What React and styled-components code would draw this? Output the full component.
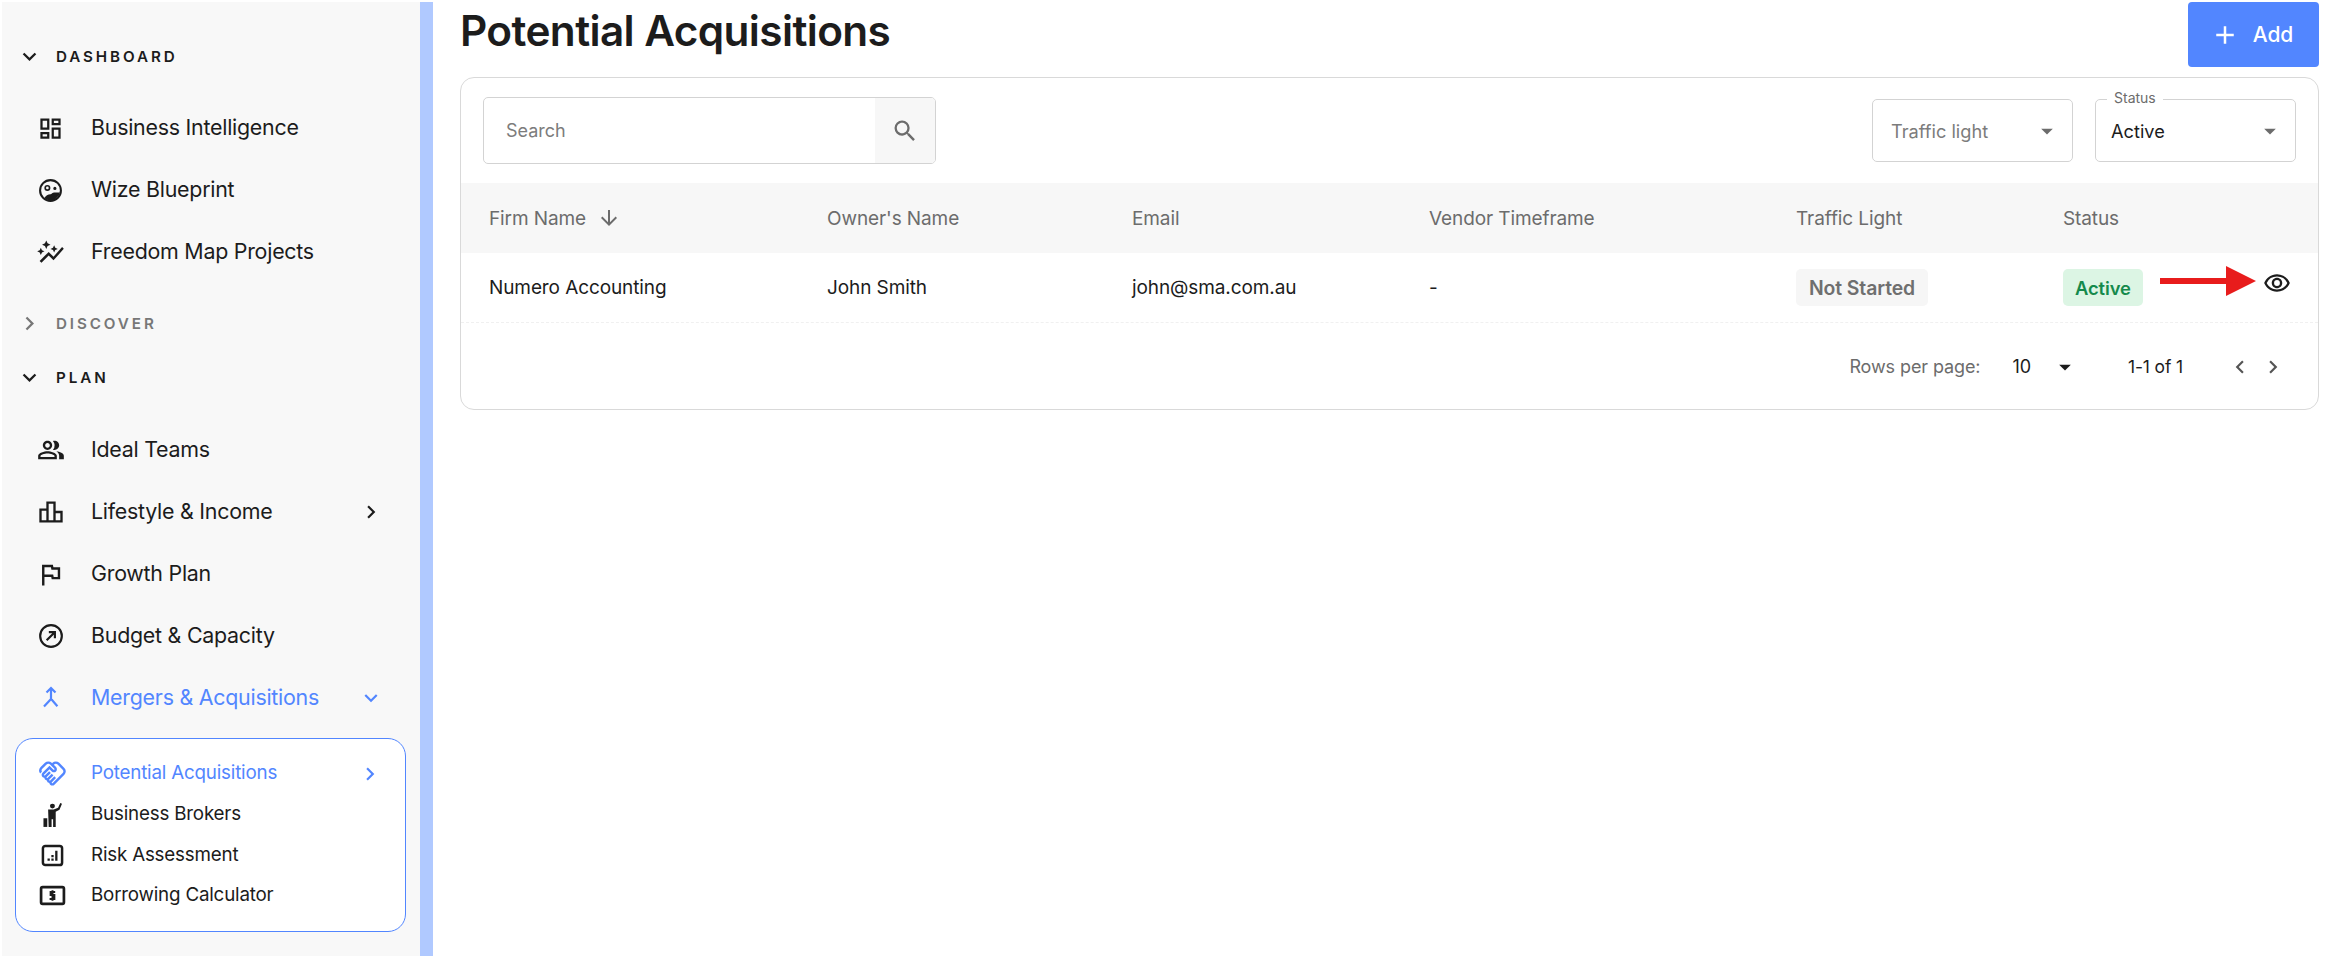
import React from 'react'
import styled, { createGlobalStyle } from 'styled-components'
import {
  MdAdd,
  MdArrowDropDown,
  MdArrowDownward,
  MdChevronLeft,
  MdChevronRight,
  MdExpandMore,
  MdOutlineAssistantPhoto,
  MdOutlineAutoGraph,
  MdOutlineDashboard,
  MdOutlineHandshake,
  MdOutlineLeaderboard,
  MdOutlinePeopleAlt,
  MdOutlineRemoveRedEye,
  MdOutlineSearch,
} from 'react-icons/md'

const FONT = '"Inter", "Liberation Sans", sans-serif'
const BLUE = '#5286ff'

const GlobalStyle = createGlobalStyle`
  html, body { margin: 0; padding: 0; background: #fff; }
  body { font-family: ${FONT}; color: #1c1c1c; }
  * { box-sizing: border-box; }
`

const Page = styled.div`
  display: flex;
  width: 2337px;
  height: 958px;
  padding: 2px 0 2px 2px;
  overflow: hidden;
`

const Sidebar = styled.aside`
  width: 431px;
  flex: none;
  background: #f8f8f8;
  border-right: 13px solid #b0c9ff;
  padding: 34px 14px 0 13px;
`

const SectionHead = styled.div`
  display: flex;
  align-items: center;
  height: 40px;
  padding-left: 1px;
  margin-top: ${p => p.$top || 0}px;
  margin-bottom: ${p => p.$bottom || 0}px;
  color: ${p => (p.$muted ? '#777' : '#1c1c1c')};
  font-size: 15.2px;
  font-weight: 600;
  letter-spacing: 2.9px;
  svg { font-size: 27px; margin-right: 13px; }
`

const NavItem = styled.div`
  display: flex;
  align-items: center;
  height: 62.2px;
  padding-left: 21px;
  color: ${p => (p.$active ? BLUE : '#1c1c1c')};
  font-size: 21.4px;
  letter-spacing: -0.25px;
`

const IconSlot = styled.span`
  width: 29px;
  height: 26px;
  flex: none;
  display: flex;
  align-items: center;
  justify-content: center;
  margin-right: ${p => p.$gap || 26}px;
  color: inherit;
  svg { display: block; }
`

const NavLabel = styled.span`
  flex: 1;
  position: relative;
  top: -1px;
`

const NavArrow = styled.span`
  display: flex;
  width: 26px;
  margin-right: 22px;
  justify-content: center;
  svg { font-size: 26px; }
`

const SubPanel = styled.div`
  margin-top: 8px;
  height: 194px;
  border: 1px solid ${BLUE};
  border-radius: 18px;
  background: #fff;
  padding: 15px 0 0;
`

const SubItem = styled.div`
  display: flex;
  align-items: center;
  height: 40.7px;
  padding-left: 22px;
  color: ${p => (p.$active ? BLUE : '#1c1c1c')};
  font-size: 18.8px;
  letter-spacing: -0.2px;
`

const Main = styled.main`
  flex: 1;
  min-width: 0;
  padding: 0 18px 0 27px;
`

const Header = styled.header`
  display: flex;
  justify-content: space-between;
  align-items: flex-start;
  height: 75px;
`

const Title = styled.h1`
  margin: 3px 0 0;
  font-size: 42.3px;
  line-height: 52px;
  font-weight: 600;
  letter-spacing: -0.6px;
  color: #1c1c1c;
`

const AddButton = styled.button`
  display: flex;
  align-items: center;
  justify-content: center;
  gap: 13px;
  width: 131px;
  height: 65px;
  padding: 0 4px 0 0;
  border: 0;
  border-radius: 4px;
  background: ${BLUE};
  color: #fff;
  font-family: ${FONT};
  font-size: 21px;
  font-weight: 500;
  svg { font-size: 30px; }
`

const Card = styled.section`
  height: 333px;
  border: 1px solid #d9d9d9;
  border-radius: 14px;
  overflow: hidden;
`

const Toolbar = styled.div`
  display: flex;
  align-items: center;
  justify-content: space-between;
  height: 105px;
  padding: 0 22px;
`

const SearchBox = styled.div`
  display: flex;
  width: 453px;
  height: 67px;
  border: 1px solid #d3d3d3;
  border-radius: 5px;
  overflow: hidden;
`

const SearchText = styled.span`
  flex: 1;
  display: flex;
  align-items: center;
  padding-left: 22px;
  font-size: 18px;
  color: #7c7c7c;
`

const SearchButton = styled.span`
  display: flex;
  align-items: center;
  justify-content: center;
  width: 60px;
  background: #f7f7f7;
  color: #6c6c6c;
  svg { font-size: 28px; }
`

const Filters = styled.div`
  display: flex;
  gap: 22px;
`

const SelectBox = styled.div`
  position: relative;
  display: flex;
  align-items: center;
  justify-content: space-between;
  width: 201px;
  height: 63px;
  padding: 0 11px 0 ${p => (p.$filled ? 15 : 18)}px;
  border: 1px solid #d3d3d3;
  border-radius: 5px;
  font-size: 18.2px;
  color: ${p => (p.$filled ? '#1c1c1c' : '#7c7c7c')};
  svg { font-size: 28px; color: #6c6c6c; }
`

const Legend = styled.span`
  position: absolute;
  top: -10px;
  left: 11px;
  padding: 0 7px;
  background: #fff;
  font-size: 14px;
  line-height: 16px;
  color: #6c6c6c;
`

const Row = styled.div`
  display: grid;
  grid-template-columns: 338px 305px 297px 367px 267px 1fr;
  align-items: center;
  height: ${p => p.$height}px;
  padding-left: 28px;
  font-size: 19px;
  letter-spacing: -0.1px;
  background: ${p => (p.$head ? '#f7f7f7' : '#fff')};
  color: ${p => (p.$head ? '#6c6c6c' : '#1c1c1c')};
  border-bottom: ${p => (p.$head ? '0' : '1px dashed #f0f0f0')};
`

const SortLabel = styled.span`
  display: flex;
  align-items: center;
  gap: 11px;
  svg { font-size: 24px; }
`

const StatusCell = styled.div`
  position: relative;
  display: flex;
  align-items: center;
`

const Badge = styled.span`
  display: inline-flex;
  align-items: center;
  height: 37px;
  padding: 0 ${p => (p.$active ? 12 : 13)}px;
  border-radius: 5px;
  font-weight: 600;
  font-size: ${p => (p.$active ? 18.4 : 19.4)}px;
  background: ${p => (p.$active ? '#dcf5e4' : '#f6f6f6')};
  color: ${p => (p.$active ? '#158a4c' : '#6f6f6f')};
`

const RedArrow = styled.svg`
  position: absolute;
  left: 97px;
  top: -4px;
`

const EyeButton = styled.span`
  position: absolute;
  left: 200px;
  top: 0;
  display: flex;
  font-size: 28px;
  color: #1c1c1c;
`

const Pager = styled.div`
  display: flex;
  align-items: center;
  justify-content: flex-end;
  height: 87px;
  padding-right: 32px;
  font-size: 18px;
  letter-spacing: -0.1px;
  color: #6c6c6c;
`

const PerPage = styled.span`
  display: flex;
  align-items: center;
  margin-left: 32px;
  color: #1c1c1c;
  svg { font-size: 28px; margin-left: 20px; color: #1c1c1c; }
`

const Range = styled.span`
  margin-left: 49px;
  font-size: 17.4px;
  color: #1c1c1c;
`

const PageButtons = styled.span`
  display: flex;
  margin-left: 44px;
  gap: 7px;
  color: #555;
  svg { font-size: 26px; display: block; }
`

const WizeIcon = () => (
  <svg width="25" height="25" viewBox="0 0 24 24" fill="none">
    <circle cx="12" cy="12" r="10" stroke="currentColor" strokeWidth="2" />
    <circle cx="9" cy="9.5" r="2.1" stroke="currentColor" strokeWidth="1.6" />
    <circle cx="16.2" cy="10" r="1.5" fill="currentColor" />
    <path d="M6 19.5c1.5-3 3.5-4 6-4 1 0 2-1.6 3.5-1.6H21l-1 3-4 4.3-4 1.2z" fill="currentColor" />
  </svg>
)

const BudgetIcon = () => (
  <svg width="26" height="26" viewBox="0 0 24 24" fill="none" stroke="currentColor" strokeWidth="2">
    <circle cx="12" cy="12" r="10" />
    <path d="M8 16l7-7M10 8.4h5.6V14" />
  </svg>
)

const MergeIcon = () => (
  <svg width="24" height="26" viewBox="0 0 24 26" fill="none" stroke="currentColor" strokeWidth="2.2">
    <path d="M12 3v11L5 21.5M12.6 14.6l5.8 6.6M7.5 7.5L12 3l4.5 4.5" />
  </svg>
)

const BrokerIcon = () => (
  <svg width="26" height="26" viewBox="0 0 24 24" fill="currentColor">
    <circle cx="11.5" cy="3.8" r="2.3" />
    <path d="M7.5 7h5.2l4-1.6 2-4.4 1.6.7-2.3 5.4-3.5 1.8V23h-2.4v-7h-1.4v7H8z" />
    <rect x="3.2" y="15" width="3.5" height="8" />
  </svg>
)

const RiskIcon = () => (
  <svg width="23" height="23" viewBox="0 0 24 24" fill="none">
    <rect x="2" y="2" width="20" height="20" rx="2.5" stroke="currentColor" strokeWidth="2.6" />
    <path d="M6.8 15h2.4v2.6H6.8zM10.8 11.5h2.4v2.4h-2.4zM10.8 15h2.4v2.6h-2.4zM14.8 7h2.4v10.6h-2.4z" fill="currentColor" />
  </svg>
)

const CashIcon = () => (
  <svg width="27" height="23" viewBox="0 0 26 22" fill="none">
    <rect x="2" y="3" width="22" height="16" rx="1.5" stroke="currentColor" strokeWidth="2.6" />
    <path d="M15.6 7.6h-4.4v3h3.6v3.8h-4.6M13 6v10" stroke="currentColor" strokeWidth="1.9" />
  </svg>
)

const dashboardItems = [
  { label: 'Business Intelligence', icon: <MdOutlineDashboard size={27} /> },
  { label: 'Wize Blueprint', icon: <WizeIcon /> },
  { label: 'Freedom Map Projects', icon: <MdOutlineAutoGraph size={29} /> },
]

const planItems = [
  { label: 'Ideal Teams', icon: <MdOutlinePeopleAlt size={28} /> },
  { label: 'Lifestyle & Income', icon: <MdOutlineLeaderboard size={28} />, arrow: <MdChevronRight /> },
  { label: 'Growth Plan', icon: <MdOutlineAssistantPhoto size={29} /> },
  { label: 'Budget & Capacity', icon: <BudgetIcon /> },
  { label: 'Mergers & Acquisitions', icon: <MergeIcon />, arrow: <MdExpandMore />, active: true },
]

const subItems = [
  { label: 'Potential Acquisitions', icon: <MdOutlineHandshake size={29} color={BLUE} />, arrow: <MdChevronRight />, active: true },
  { label: 'Business Brokers', icon: <BrokerIcon /> },
  { label: 'Risk Assessment', icon: <RiskIcon /> },
  { label: 'Borrowing Calculator', icon: <CashIcon /> },
]

const columns = ['Owner\'s Name', 'Email', 'Vendor Timeframe', 'Traffic Light', 'Status']

export default function App() {
  const renderNav = items => items.map(item => (
    <NavItem key={item.label} $active={item.active}>
      <IconSlot>{item.icon}</IconSlot>
      <NavLabel>{item.label}</NavLabel>
      {item.arrow && <NavArrow>{item.arrow}</NavArrow>}
    </NavItem>
  ))

  return (
    <Page>
      <GlobalStyle />
      <Sidebar>
        <SectionHead $bottom={21}><MdExpandMore />DASHBOARD</SectionHead>
        {renderNav(dashboardItems)}
        <SectionHead $muted $top={20}><MdChevronRight />DISCOVER</SectionHead>
        <SectionHead $top={14} $bottom={21}><MdExpandMore />PLAN</SectionHead>
        {renderNav(planItems)}
        <SubPanel>
          {subItems.map(item => (
            <SubItem key={item.label} $active={item.active}>
              <IconSlot $gap={24}>{item.icon}</IconSlot>
              <NavLabel>{item.label}</NavLabel>
              {item.arrow && <NavArrow>{item.arrow}</NavArrow>}
            </SubItem>
          ))}
        </SubPanel>
      </Sidebar>

      <Main>
        <Header>
          <Title>Potential Acquisitions</Title>
          <AddButton><MdAdd />Add</AddButton>
        </Header>
        <Card>
          <Toolbar>
            <SearchBox>
              <SearchText>Search</SearchText>
              <SearchButton><MdOutlineSearch /></SearchButton>
            </SearchBox>
            <Filters>
              <SelectBox>Traffic light<MdArrowDropDown /></SelectBox>
              <SelectBox $filled>
                <Legend>Status</Legend>
                Active<MdArrowDropDown />
              </SelectBox>
            </Filters>
          </Toolbar>
          <Row $head $height={70}>
            <SortLabel>Firm Name <MdArrowDownward /></SortLabel>
            {columns.map(c => <span key={c}>{c}</span>)}
          </Row>
          <Row $height={70}>
            <span>Numero Accounting</span>
            <span>John Smith</span>
            <span>john@sma.com.au</span>
            <span>-</span>
            <span><Badge>Not Started</Badge></span>
            <StatusCell>
              <Badge $active>Active</Badge>
              <RedArrow width="96" height="32" viewBox="0 0 96 32">
                <path d="M0 13h66V1l30 15-30 15V19H0z" fill="#e81c1c" />
              </RedArrow>
              <EyeButton><MdOutlineRemoveRedEye /></EyeButton>
            </StatusCell>
          </Row>
          <Pager>
            <span>Rows per page:</span>
            <PerPage>10<MdArrowDropDown /></PerPage>
            <Range>1-1 of 1</Range>
            <PageButtons><MdChevronLeft /><MdChevronRight /></PageButtons>
          </Pager>
        </Card>
      </Main>
    </Page>
  )
}
